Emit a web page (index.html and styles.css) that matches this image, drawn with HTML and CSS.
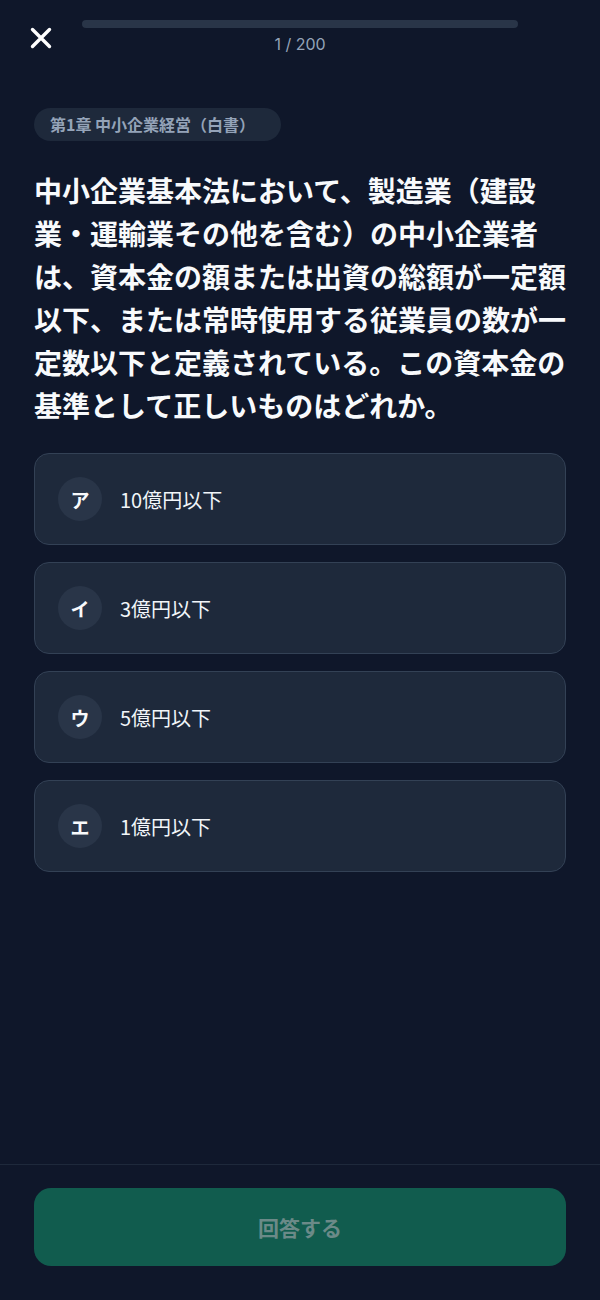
FILE: index.html
```html
<!DOCTYPE html>
<html lang="ja">
<head>
<meta charset="utf-8">
<link rel="stylesheet" href="styles.css">
</head>
<body>
<div class="app">
  <header class="top">
    <button class="close" aria-label="close">
      <svg width="22" height="22" viewBox="0 0 22 22"><path d="M2.5 2.5 L19.5 19.5 M19.5 2.5 L2.5 19.5" stroke="#fff" stroke-width="3.4" stroke-linecap="round"/></svg>
    </button>
    <div class="progress">
      <div class="track"></div>
      <div class="count">1 / 200</div>
    </div>
  </header>
  <main class="content">
    <div class="badge">第1章 中小企業経営（白書）</div>
    <h1 class="question">中小企業基本法において、製造業（建設業・運輸業その他を含む）の中小企業者は、資本金の額または出資の総額が一定額以下、または常時使用する従業員の数が一定数以下と定義されている。この資本金の基準として正しいものはどれか。</h1>
    <ul class="options">
      <li class="option"><span class="mark">ア</span><span class="label">10億円以下</span></li>
      <li class="option"><span class="mark">イ</span><span class="label">3億円以下</span></li>
      <li class="option"><span class="mark">ウ</span><span class="label">5億円以下</span></li>
      <li class="option"><span class="mark">エ</span><span class="label">1億円以下</span></li>
    </ul>
  </main>
  <footer class="footer">
    <button class="submit">回答する</button>
  </footer>
</div>
</body>
</html>
```
FILE: styles.css
```css
* { box-sizing: border-box; }
html, body { margin: 0; padding: 0; }
body {
  background: #0f172a;
  font-family: "Noto Sans CJK JP", "Noto Sans", sans-serif;
  color: #f1f5f9;
  width: 600px;
  height: 1300px;
  overflow: hidden;
}
.app {
  height: 1300px;
  display: flex;
  flex-direction: column;
}
.top {
  display: flex;
  align-items: flex-start;
  padding: 20px 82px 0 29px;
  height: 60px;
}
.close {
  background: none;
  border: 0;
  padding: 0;
  margin: 6px 0 0 0;
  width: 24px;
  height: 24px;
  display: flex;
  align-items: center;
  justify-content: center;
  flex: none;
}
.progress {
  flex: 1;
  margin-left: 29px;
  display: flex;
  flex-direction: column;
  align-items: center;
}
.track {
  width: 100%;
  height: 8px;
  border-radius: 4px;
  background: #293548;
}
.count {
  margin-top: 6px;
  font-family: "Inter", "Noto Sans", sans-serif;
  font-size: 16px;
  line-height: 20px;
  color: #94a3b8;
}
.content {
  flex: 1;
  padding: 48px 34px 0;
}
.badge {
  display: inline-block;
  background: #1e293b;
  color: #94a3b8;
  font-size: 16px;
  font-weight: 700;
  line-height: 33px;
  height: 33px;
  padding: 0 26px 0 16px;
  border-radius: 17px;
}
.question {
  margin: 28px 0 0;
  font-size: 28px;
  font-weight: 700;
  line-height: 43px;
  color: #f8fafc;
  letter-spacing: 0;
}
.options {
  list-style: none;
  margin: 26px 0 0;
  padding: 0;
  display: flex;
  flex-direction: column;
  gap: 17px;
}
.option {
  height: 92px;
  background: #1e293b;
  border: 1px solid #334155;
  border-radius: 15px;
  display: flex;
  align-items: center;
  padding: 0 0 0 23px;
}
.mark {
  width: 44px;
  height: 44px;
  border-radius: 50%;
  background: #293548;
  display: flex;
  align-items: center;
  justify-content: center;
  font-size: 19px;
  font-weight: 700;
  color: #f8fafc;
  flex: none;
}
.label {
  margin-left: 18px;
  font-size: 20px;
  color: #f1f5f9;
}
.footer {
  border-top: 1px solid #1e293b;
  padding: 23px 34px 34px;
  height: 136px;
  flex: none;
}
.submit {
  width: 100%;
  height: 78px;
  border: 0;
  border-radius: 17px;
  background: #115c4e;
  color: #6b8a88;
  font-family: "Noto Sans CJK JP", "Noto Sans", sans-serif;
  font-size: 21px;
  font-weight: 700;
}
```
